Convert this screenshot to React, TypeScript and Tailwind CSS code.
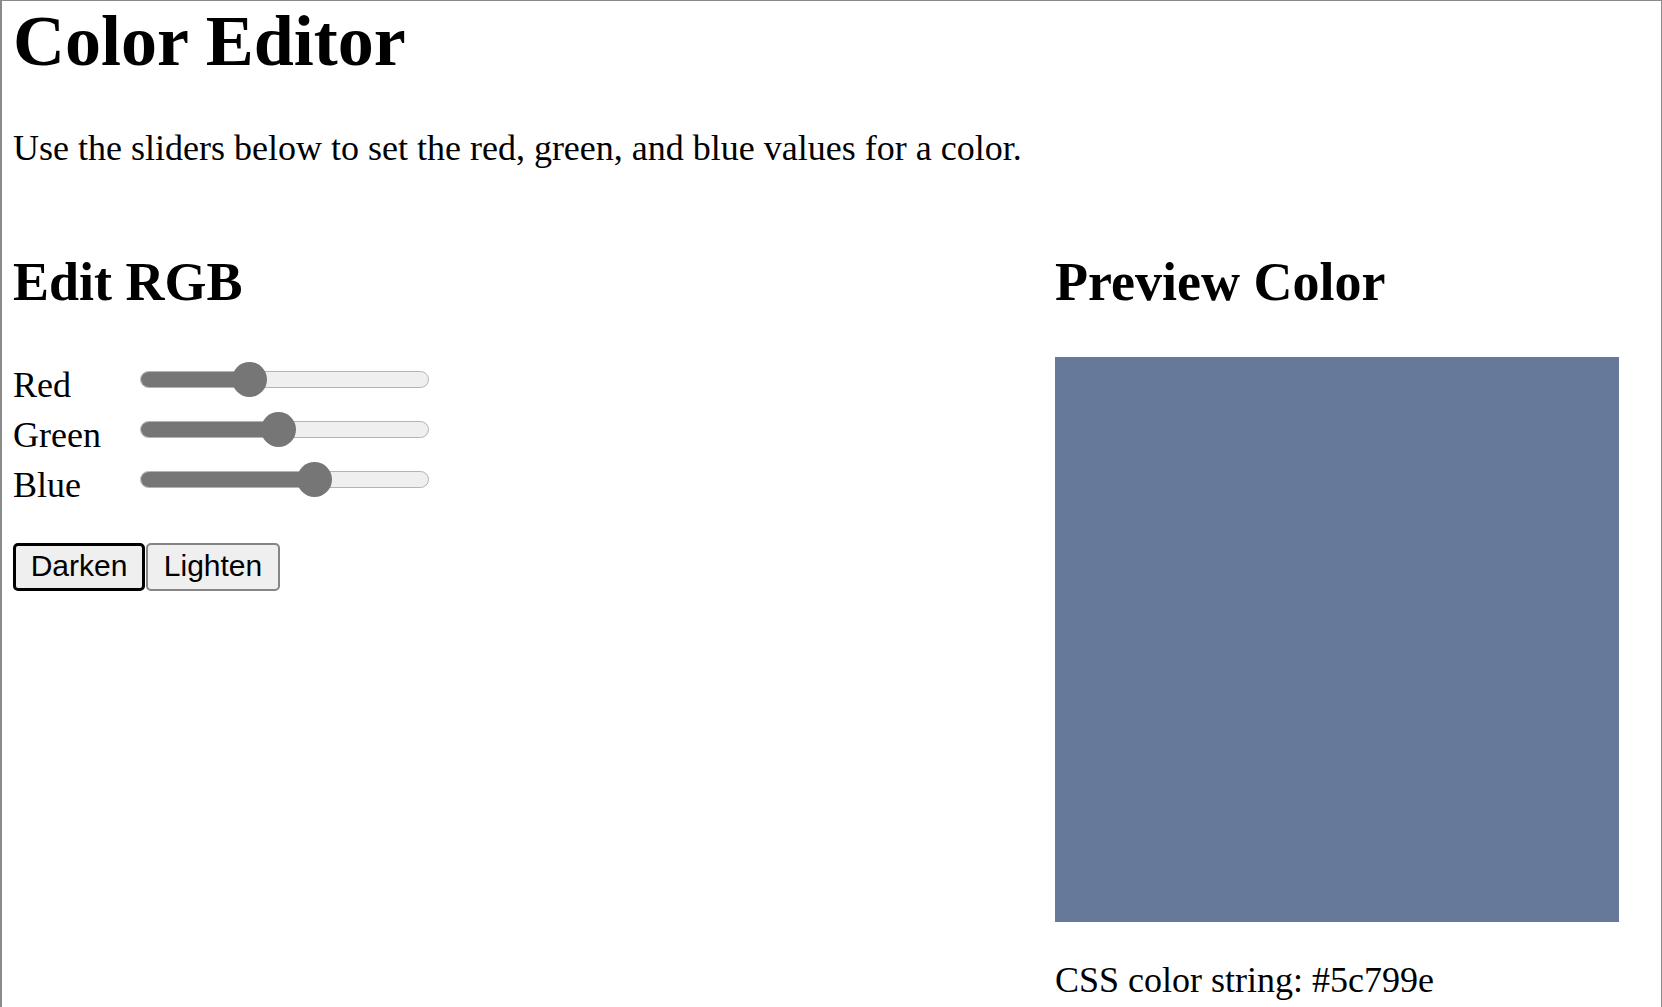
import { useState } from "react";

type Channel = "r" | "g" | "b";

const TRACK_W = 289;
const THUMB = 35;

function Slider({ value }: { value: number }) {
  // centre of the thumb, in px from the left of the track
  const pos = THUMB / 2 + (value / 255) * (TRACK_W - THUMB);
  return (
    <div className="relative mt-[2px] flex h-[35px] w-[289px] items-center">
      <div className="relative h-[17px] w-full overflow-hidden rounded-full border border-[#b3b3b3] bg-[#efefef]">
        <div className="h-full bg-[#767676]" style={{ width: pos }} />
      </div>
      <div
        className="absolute top-0 h-[35px] w-[35px] rounded-full bg-[#767676]"
        style={{ left: pos - THUMB / 2 }}
      />
    </div>
  );
}

export default function App() {
  const [rgb, setRgb] = useState({ r: 0x5c, g: 0x79, b: 0x9e });

  const hex =
    "#" +
    (["r", "g", "b"] as Channel[])
      .map((k) => rgb[k].toString(16).padStart(2, "0"))
      .join("");

  const shift = (d: number) =>
    setRgb((c) => ({
      r: Math.min(255, Math.max(0, c.r + d)),
      g: Math.min(255, Math.max(0, c.g + d)),
      b: Math.min(255, Math.max(0, c.b + d)),
    }));

  const rows: { label: string; key: Channel }[] = [
    { label: "Red", key: "r" },
    { label: "Green", key: "g" },
    { label: "Blue", key: "b" },
  ];

  return (
    <div className="min-h-[1007px] w-[1662px] border-t border-r border-l-2 border-[#8a8a8a] bg-white pl-[11px] font-['Liberation_Serif','Times_New_Roman',serif] text-black">
      <h1 className="text-[72px] leading-[80px] font-bold">Color Editor</h1>

      <p className="mt-[49px] text-[36px] leading-[36px]">
        Use the sliders below to set the red, green, and blue values for a color.
      </p>

      <div className="mt-[89px] grid grid-cols-[1042px_1fr]">
        {/* left column: sliders */}
        <div>
          <h2 className="text-[54px] leading-[54px] font-bold">Edit RGB</h2>

          <div className="mt-[51px] flex flex-col">
            {rows.map((row) => (
              <div key={row.key} className="flex h-[50px] items-start">
                <span className="w-[127px] text-[36px] leading-[50px]">{row.label}</span>
                <Slider value={rgb[row.key]} />
              </div>
            ))}
          </div>

          <div className="mt-[33px] flex gap-[1px] font-['Liberation_Sans',Arial,sans-serif] text-[30px]">
            <button
              onClick={() => shift(-16)}
              className="h-[48px] w-[132px] rounded-[5px] border-[3px] border-black bg-[#efefef] pb-[2px] leading-none"
            >
              Darken
            </button>
            <button
              onClick={() => shift(16)}
              className="h-[48px] w-[134px] rounded-[5px] border-2 border-[#858585] bg-[#efefef] pb-[2px] leading-none"
            >
              Lighten
            </button>
          </div>
        </div>

        {/* right column: preview */}
        <div>
          <h2 className="text-[54px] leading-[54px] font-bold">Preview Color</h2>
          <div className="mt-[48px] h-[565px] w-[564px] bg-[#67799b]" />
          <p className="mt-[40px] text-[36px] leading-[36px]">CSS color string: {hex}</p>
        </div>
      </div>
    </div>
  );
}
